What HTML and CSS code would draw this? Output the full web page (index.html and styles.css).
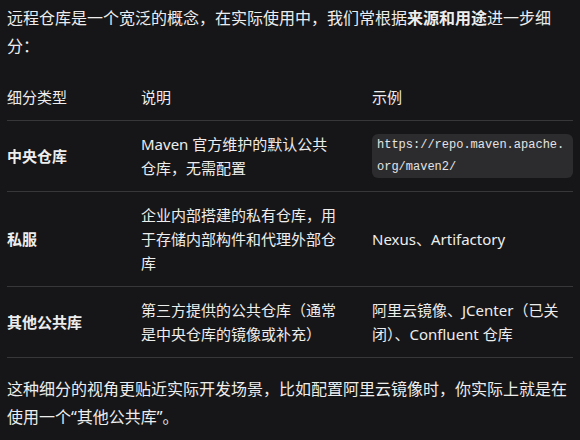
FILE: index.html
```html
<!DOCTYPE html>
<html lang="zh-CN">

<head>
  <meta charset="UTF-8">
  <meta name="viewport" content="width=device-width, initial-scale=1.0">
  <title>远程仓库分类</title>
  <link rel="stylesheet" href="styles.css">
</head>

<body>
  <div class="answer">
    <p class="lead">远程仓库是一个宽泛的概念，在实际使用中，我们常根据<strong>来源和用途</strong>进一步细分：</p>

    <table class="repo-table">
      <colgroup>
        <col class="col-type">
        <col class="col-desc">
        <col class="col-demo">
      </colgroup>
      <thead>
        <tr>
          <th>细分类型</th>
          <th>说明</th>
          <th>示例</th>
        </tr>
      </thead>
      <tbody>
        <tr>
          <td><strong>中央仓库</strong></td>
          <td>Maven 官方维护的默认公共仓库，无需配置</td>
          <td><code class="url">https://repo.maven.apache.org/maven2/</code></td>
        </tr>
        <tr>
          <td><strong>私服</strong></td>
          <td>企业内部搭建的私有仓库，用于存储内部构件和代理外部仓库</td>
          <td>Nexus、Artifactory</td>
        </tr>
        <tr>
          <td><strong>其他公共库</strong></td>
          <td>第三方提供的公共仓库（通常是中央仓库的镜像或补充）</td>
          <td>阿里云镜像、JCenter（已关闭）、Confluent 仓库</td>
        </tr>
      </tbody>
    </table>

    <p class="tail">这种细分的视角更贴近实际开发场景，比如配置阿里云镜像时，你实际上就是在使用一个“其他公共库”。</p>
  </div>
</body>

</html>
```

FILE: styles.css
```css
body {
  margin: 0;
  background: #161618;
  color: #ededed;
  font-family: "Noto Sans", "Noto Sans CJK SC", sans-serif;
}
.answer {
  padding: 4px 7px 0;
}
.lead,
.tail {
  margin: 0;
  font-size: 16px;
  line-height: 28px;
}
.tail {
  margin-top: 17px;
}
strong {
  font-weight: 700;
}

/* 表格 */
.repo-table {
  width: 100%;
  margin-top: 14px;
  border-collapse: collapse;
  table-layout: fixed;
  font-size: 15px;
  line-height: 24px;
}
/* 列宽含内边距 */
.col-type {
  width: 118px;
}
.col-desc {
  width: 231px;
}
.repo-table th,
.repo-table td {
  padding: 11px 16px;
  text-align: left;
  vertical-align: middle;
  border-bottom: 1px solid #37373a;
}
.repo-table th {
  font-weight: 400;
}
.repo-table th:first-child,
.repo-table td:first-child {
  padding-left: 0;
}
.repo-table th:last-child,
.repo-table td:last-child {
  padding-right: 0;
}

/* 链接代码块 */
.url {
  display: block;
  padding: 0 5px;
  background: #2c2c2f;
  border-radius: 6px;
  color: #e4e4e4;
  font-family: "Liberation Mono", monospace;
  font-size: 12px;
  line-height: 22px;
  word-break: break-all;
}
```
